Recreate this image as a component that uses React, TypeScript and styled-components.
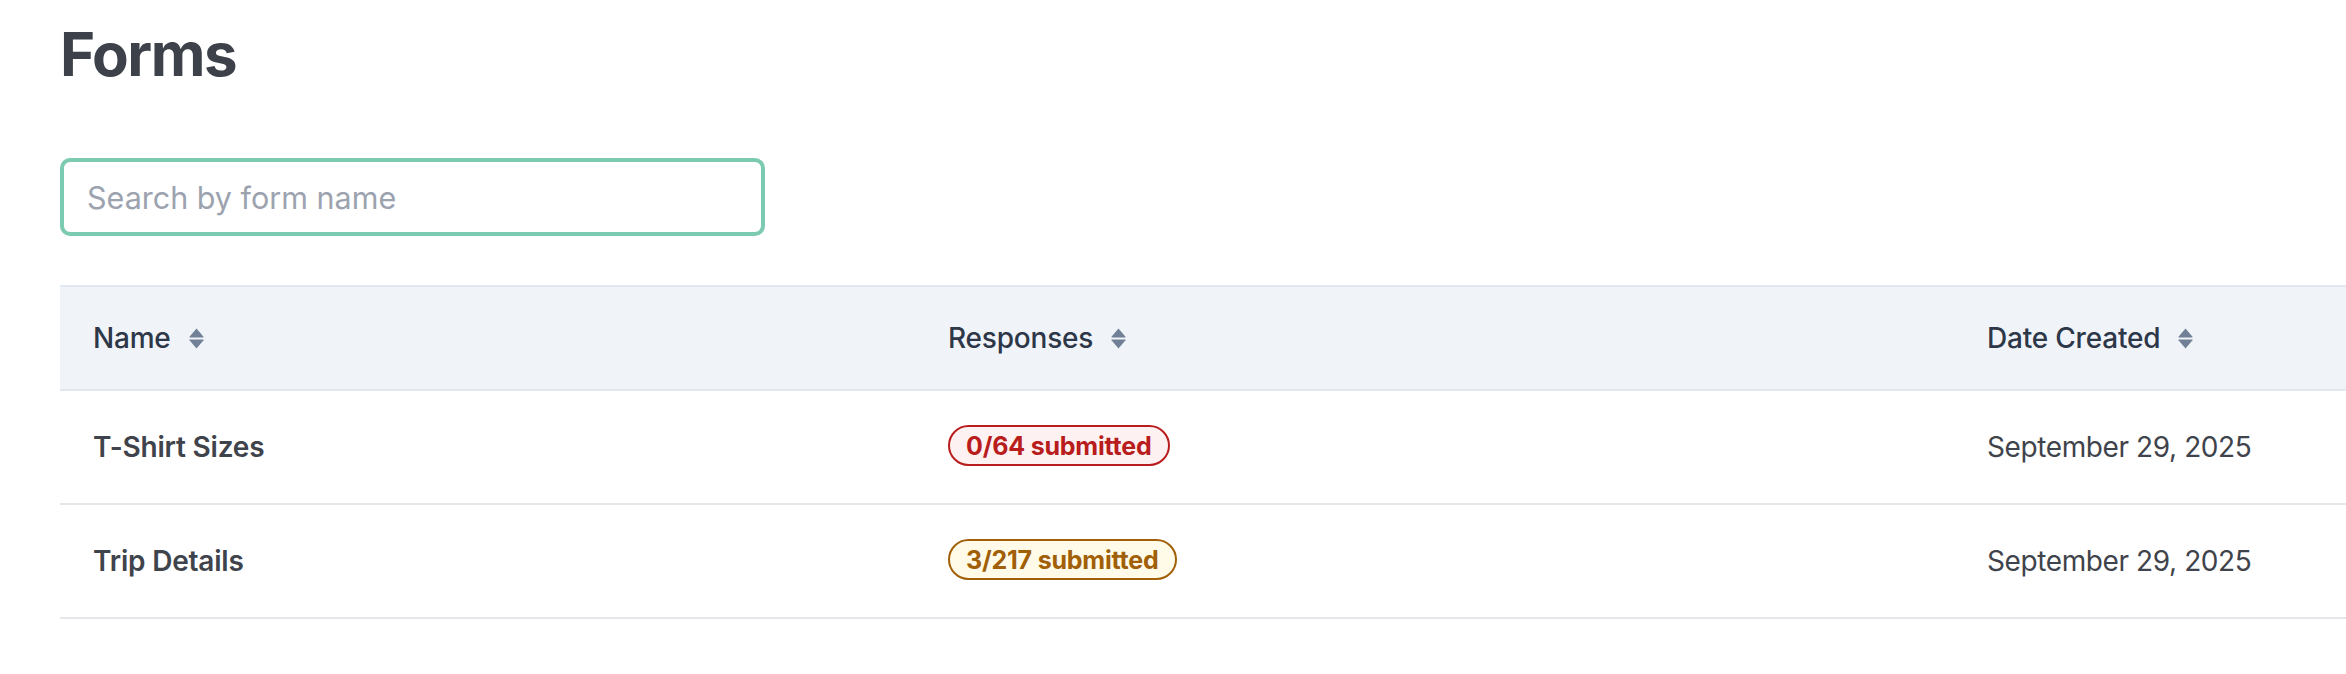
import styled, { createGlobalStyle } from 'styled-components'

const GlobalStyle = createGlobalStyle`
  html, body {
    margin: 0;
    padding: 0;
    background: #ffffff;
    overflow: hidden;
  }
  body {
    font-family: Inter, "Noto Sans", "Liberation Sans", sans-serif;
    -webkit-font-smoothing: antialiased;
  }
  * { box-sizing: border-box; }
`

const Page = styled.main`
  padding: 18px 0 0 60px;
  min-height: 674px;
`

const Title = styled.h1`
  margin: 0;
  font-size: 60px;
  line-height: 72px;
  font-weight: 700;
  color: #3d4149;
  letter-spacing: -1.5px;
`

const Search = styled.input`
  display: block;
  margin-top: 68px;
  width: 705px;
  height: 78px;
  padding: 0 23px;
  border: 4px solid #7dcab3;
  border-radius: 10px;
  outline: none;
  font-family: inherit;
  font-size: 30.5px;
  color: #374151;
  background: #fff;

  &::placeholder {
    color: #9ca3af;
  }
`

const Table = styled.section`
  margin-top: 49px;
  width: 100%;
`

const Row = styled.div<{ $head?: boolean }>`
  display: grid;
  grid-template-columns: 855px 1039px 1fr;
  align-items: center;
  height: ${p => (p.$head ? '106px' : '114px')};
  background: ${p => (p.$head ? '#f0f4f9' : '#fff')};
  border-top: ${p => (p.$head ? '2px solid #e2e8f0' : 'none')};
  border-bottom: 2px solid ${p => (p.$head ? '#e2e8f0' : '#e5e7eb')};
`

const HeadCell = styled.div`
  display: flex;
  align-items: center;
  gap: 18px;
  padding-left: 33px;
  font-size: 28px;
  font-weight: 500;
  color: #2d3748;
  letter-spacing: -0.2px;
`

const Cell = styled.div<{ $strong?: boolean }>`
  padding-left: 33px;
  font-size: 28px;
  font-weight: ${p => (p.$strong ? 600 : 400)};
  color: #3f434b;
  letter-spacing: ${p => (p.$strong ? '-0.2px' : '-0.4px')};
`

const tones = {
  red: { fg: '#b91c1c', bg: '#fef1f1' },
  amber: { fg: '#a15f07', bg: '#fffbe8' },
}

const Badge = styled.span<{ $tone: keyof typeof tones }>`
  display: inline-flex;
  align-items: center;
  height: 41px;
  padding: 0 16px;
  border: 2px solid ${p => tones[p.$tone].fg};
  border-radius: 999px;
  background: ${p => tones[p.$tone].bg};
  color: ${p => tones[p.$tone].fg};
  font-size: 25px;
  font-weight: 700;
  letter-spacing: -0.2px;
  margin-top: -6px;
`

function SortIcon() {
  return (
    <svg width="15" height="21" viewBox="0 0 15 21" aria-hidden="true">
      <path d="M7.5 0.5 L14.5 8.8 Q15 9.5 14 9.5 L1 9.5 Q0 9.5 0.5 8.8 Z" fill="#718096" />
      <path d="M7.5 20.5 L14.5 12.2 Q15 11.5 14 11.5 L1 11.5 Q0 11.5 0.5 12.2 Z" fill="#718096" />
    </svg>
  )
}

type Form = {
  name: string
  submitted: number
  total: number
  created: string
}

const forms: Form[] = [
  { name: 'T-Shirt Sizes', submitted: 0, total: 64, created: 'September 29, 2025' },
  { name: 'Trip Details', submitted: 3, total: 217, created: 'September 29, 2025' },
]

function App() {
  return (
    <>
      <GlobalStyle />
      <Page>
        <Title>Forms</Title>
        <Search placeholder="Search by form name" />
        <Table>
          <Row $head>
            <HeadCell>Name <SortIcon /></HeadCell>
            <HeadCell>Responses <SortIcon /></HeadCell>
            <HeadCell>Date Created <SortIcon /></HeadCell>
          </Row>
          {forms.map(form => (
            <Row key={form.name}>
              <Cell $strong>{form.name}</Cell>
              <Cell>
                <Badge $tone={form.submitted === 0 ? 'red' : 'amber'}>
                  {`${form.submitted}/${form.total} submitted`}
                </Badge>
              </Cell>
              <Cell>{form.created}</Cell>
            </Row>
          ))}
        </Table>
      </Page>
    </>
  )
}

export default App
